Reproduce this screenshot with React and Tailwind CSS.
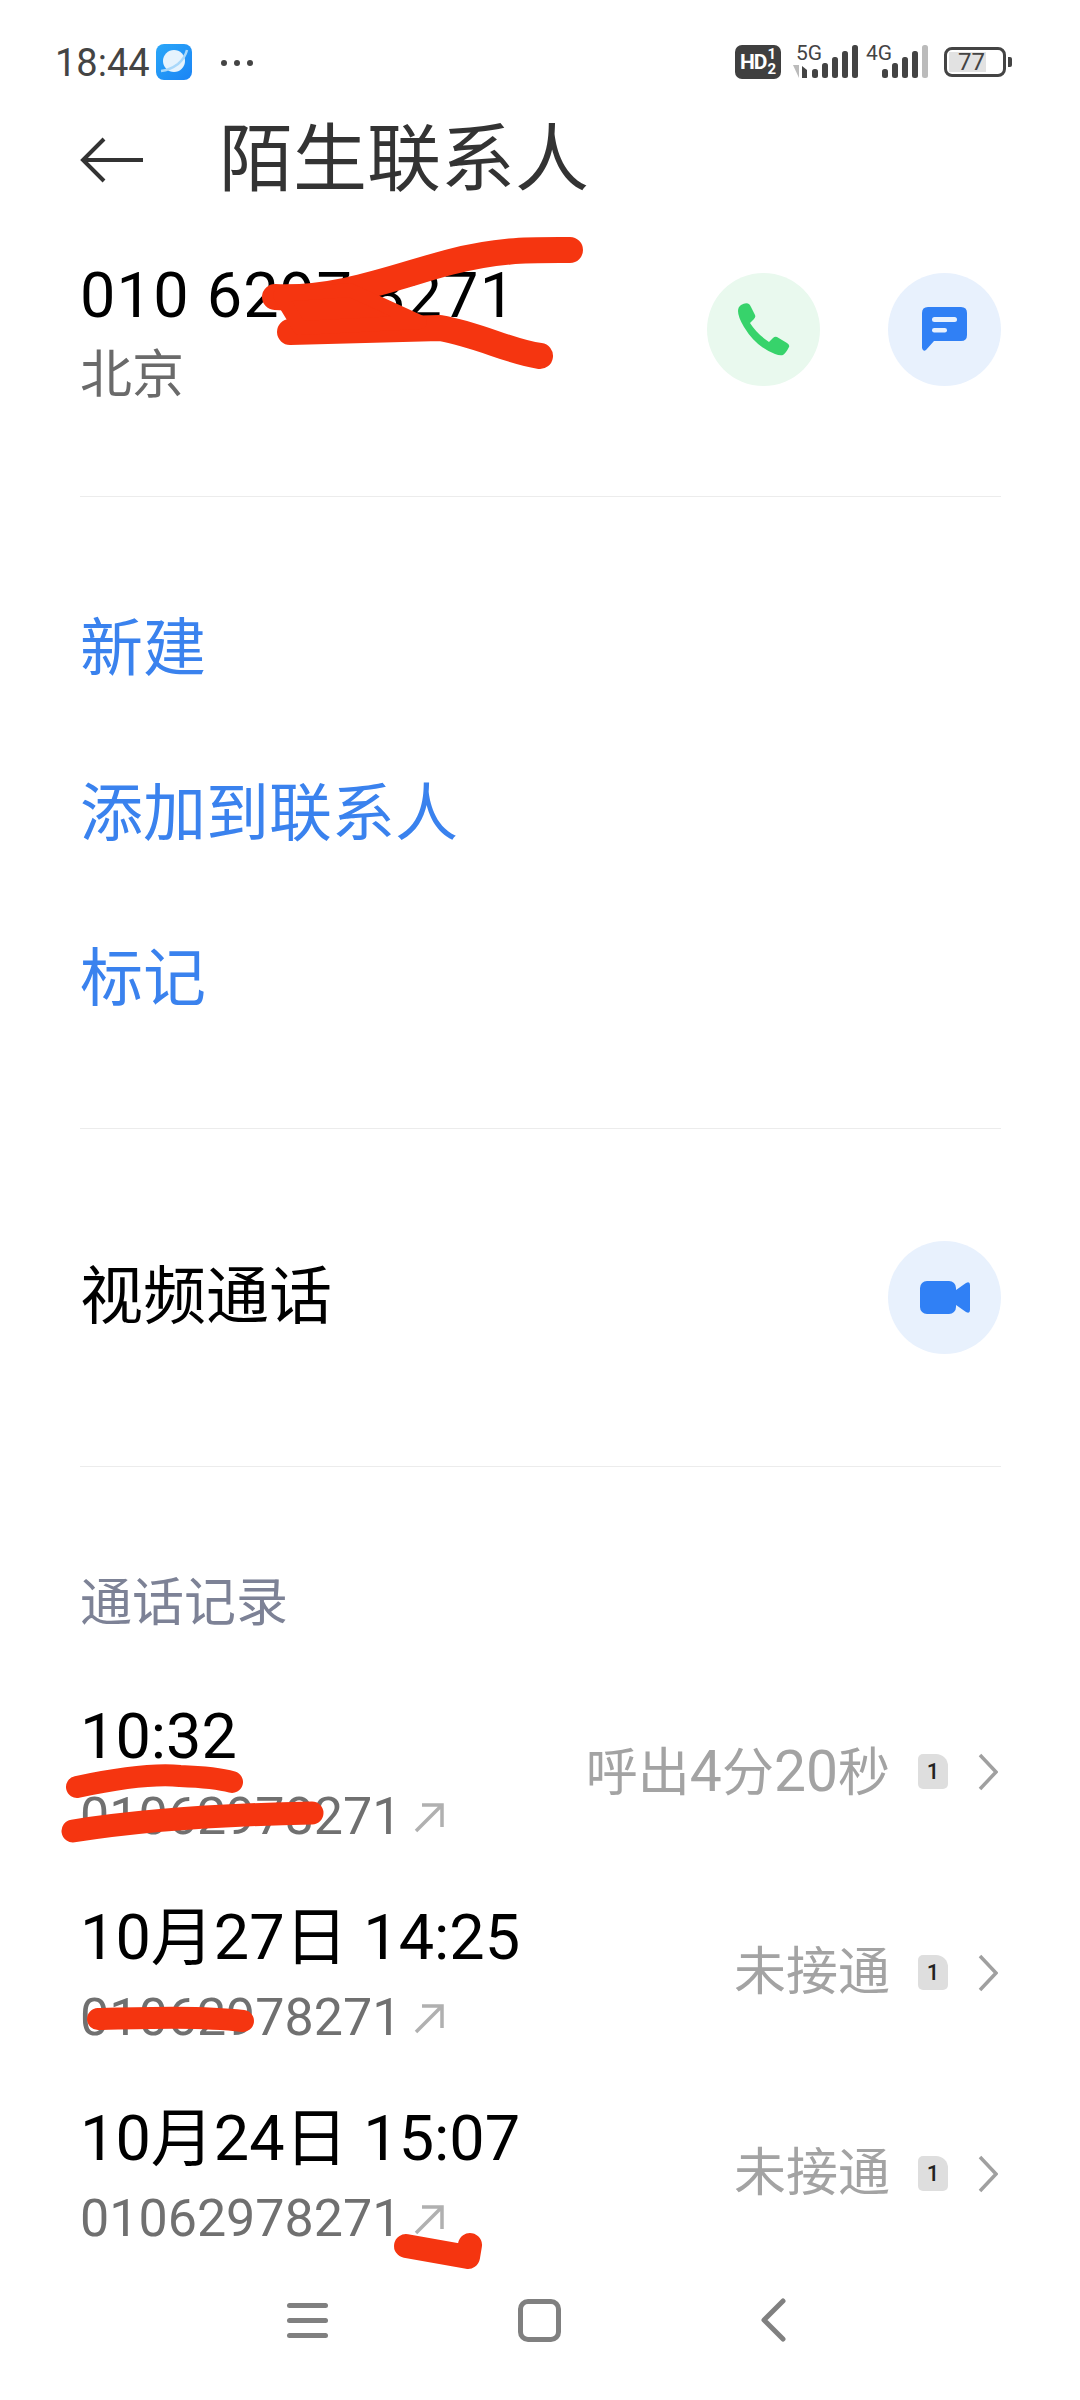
import React from 'react';

const font = "font-['Roboto','Noto_Sans_CJK_SC',sans-serif]";

const StatusBar = () => (
    <div className="h-[124px] flex items-center pl-[55px] pr-[68px] text-[#444]">
        <span className="text-[38px] leading-none w-[93px] pt-[2px]">18:44</span>
        <svg width="36" height="36" viewBox="0 0 36 36" className="ml-[8px]">
            <defs>
                <linearGradient id="appBg" x1="0" y1="0" x2="1" y2="1">
                    <stop offset="0" stopColor="#2aa7f8" />
                    <stop offset="1" stopColor="#1b84f5" />
                </linearGradient>
            </defs>
            <rect width="36" height="36" rx="8" fill="url(#appBg)" />
            <circle cx="18" cy="17" r="11" fill="#e6f3fd" />
            <path d="M5 27 Q14 26 22 20 Q29 14 31 6" fill="none" stroke="#a9d8fa" strokeWidth="2.5" />
        </svg>
        <div className="ml-[29px] mt-[2px] flex gap-[7px]">
            <div className="w-[6px] h-[6px] rounded-full bg-[#444]" />
            <div className="w-[6px] h-[6px] rounded-full bg-[#444]" />
            <div className="w-[6px] h-[6px] rounded-full bg-[#444]" />
        </div>
        <div className="ml-auto flex items-center">
            <div className="w-[46px] h-[34px] rounded-[7px] bg-[#3f3f3f] text-white flex items-center justify-center gap-[1px] font-bold">
                <span className="text-[21px] tracking-[-1px] leading-none">HD</span>
                <div className="flex flex-col text-[15px] leading-[15px]">
                    <span>1</span>
                    <span>2</span>
                </div>
            </div>
            <svg width="150" height="42" viewBox="0 -6 150 42" className="ml-[10px] mb-[10px]">
                <text x="5" y="18" fontSize="21" fill="#444">5G</text>
                <path d="M2 23 H8 V36 Z" fill="#bbb" />
                <path d="M11 24 L16 28 V36 H11Z" fill="#444" />
                <rect x="21" y="27" width="6" height="9" rx="2.5" fill="#444" />
                <rect x="31" y="21" width="6" height="15" rx="2.5" fill="#444" />
                <rect x="41" y="15" width="6" height="21" rx="2.5" fill="#444" />
                <rect x="51" y="9" width="6" height="27" rx="2.5" fill="#444" />
                <rect x="61" y="3" width="6" height="33" rx="2.5" fill="#444" />
                <text x="75" y="18" fontSize="21" fill="#444">4G</text>
                <rect x="91" y="27" width="6" height="9" rx="2.5" fill="#444" />
                <rect x="101" y="21" width="6" height="15" rx="2.5" fill="#444" />
                <rect x="111" y="15" width="6" height="21" rx="2.5" fill="#444" />
                <rect x="121" y="9" width="6" height="27" rx="2.5" fill="#444" />
                <rect x="131" y="3" width="6" height="33" rx="2.5" fill="#bbb" />
            </svg>
            <div className="ml-[3px] w-[62px] h-[30px] rounded-[8px] border-[3px] border-[#444] p-[2px] flex">
                <div className="w-[37px] bg-[#e2e2e2] flex items-center justify-end pr-[1px] text-[24px] leading-none">77</div>
            </div>
            <div className="ml-[2px] w-[4px] h-[10px] rounded-r-[2px] bg-[#444]" />
        </div>
    </div>
);

const RoundIcon = ({ children }) => (
    <div className="w-[113px] h-[113px] rounded-full bg-[#e8f1fd] flex items-center justify-center">
        {children}
    </div>
);

const Divider = () => <div className="h-[1px] bg-[#ececec]" />;

const CallRow = ({ time, status }) => (
    <div className="h-[201px] flex items-center">
        <div className="mt-[11px]">
            <div className="text-[63px] leading-[80px] text-black">{time}</div>
            <div className="flex items-center text-[52px] leading-[80px] text-[#707070]">
                01062978271
                <svg width="30" height="30" viewBox="0 0 30 30" className="ml-[13px] mt-[2px]" fill="none" stroke="#b0b0b0" strokeWidth="3.5">
                    <path d="M2 28 L28 2 M8 2 H28 V24" />
                </svg>
            </div>
        </div>
        <span className="ml-auto text-[52px] leading-none text-[#a3a3a3]">{status}</span>
        <div className="ml-[28px] w-[30px] h-[35px] bg-[#dedede] rounded-[5px] rounded-tr-[12px] flex items-center justify-center text-[22px] font-medium leading-none text-[#222]">1</div>
        <svg width="20" height="38" viewBox="0 0 20 38" className="ml-[30px] mr-[3px]" fill="none" stroke="#a0a0a0" strokeWidth="3.5">
            <path d="M2 2 L18 19 L2 36" />
        </svg>
    </div>
);

const App = () => {
    return (
        <div className={`${font} relative w-[1080px] h-[2400px] bg-white overflow-hidden`}>
            <StatusBar />

            {/* Header */}
            <div className="h-[66px] pt-[6px] flex items-center pl-[80px]">
                <svg width="63" height="46" viewBox="0 0 63 46" fill="none" stroke="#333" strokeWidth="4">
                    <path d="M63 23 H3 M24 2 L3 23 L24 44" />
                </svg>
                <h1 className="ml-[76px] text-[74px] leading-none text-[#333]">陌生联系人</h1>
            </div>

            <div className="pl-[80px] pr-[79px]">
                {/* Contact */}
                <div className="h-[306px] flex items-start">
                    <div className="pt-[66px]">
                        <div className="text-[63px] tracking-[1.2px] leading-[80px] text-black">010 6297 8271</div>
                        <div className="text-[52px] leading-[80px] text-[#6a6a6a]">北京</div>
                    </div>
                    <div className="ml-auto mt-[83px] flex gap-[68px]">
                        <div className="w-[113px] h-[113px] rounded-full bg-[#e9f9ee] flex items-center justify-center">
                            <svg width="52" height="53" viewBox="0 0 52 53" fill="#37d36b">
                                <path d="M3 2 Q7 -0.5 10 0.5 Q12 1 13 4 L17 12 Q18 14 16 16 L12 20 Q19 31 31 39 L35 35 Q37 33 39 34 L49 40 Q52 42 51 44 Q48 50 45 52 Q42 53 37 51 Q18 44 6 24 Q0 14 0 8 Q0 4 3 2Z" />
                            </svg>
                        </div>
                        <RoundIcon>
                            <svg width="45" height="45" viewBox="0 0 45 45">
                                <path d="M6 0 H39 Q45 0 45 6 V28 Q45 34 39 34 H12 L4 43 Q1 45 0 41 V6 Q0 0 6 0Z" fill="#3080f5" />
                                <rect x="10" y="10" width="25" height="5" rx="2.5" fill="#e8f1fd" />
                                <rect x="10" y="21" width="15" height="4.5" rx="2.2" fill="#e8f1fd" />
                            </svg>
                        </RoundIcon>
                    </div>
                </div>
                <Divider />

                {/* Actions */}
                <div className="pt-[70px] pb-[66px] text-[63px] text-[#3a82ee]">
                    <div className="h-[165px] flex items-center">新建</div>
                    <div className="h-[165px] flex items-center">添加到联系人</div>
                    <div className="h-[165px] flex items-center">标记</div>
                </div>
                <Divider />

                {/* Video call */}
                <div className="h-[337px] flex items-center justify-between text-[63px] text-black">
                    <span>视频通话</span>
                    <RoundIcon>
                        <svg width="50" height="33" viewBox="0 0 50 33" fill="#3080f5">
                            <rect width="36" height="33" rx="7" />
                            <path d="M36 9 L46 2 Q50 0 50 4 V29 Q50 33 46 31 L36 24Z" />
                        </svg>
                    </RoundIcon>
                </div>
                <Divider />

                {/* Call log */}
                <div className="pt-[107px] pb-[37px] text-[52px] leading-[60px] text-[#7d8296]">通话记录</div>
                <CallRow
                    time="10:32"
                    status={<>呼出<span className="text-[57px]">4</span>分<span className="text-[57px]">20</span>秒</>}
                />
                <CallRow time="10月27日 14:25" status="未接通" />
                <CallRow time="10月24日 15:07" status="未接通" />
            </div>

            {/* Nav bar */}
            <div className="h-[92px] flex items-center pl-[287px]">
                <div className="w-[41px] flex flex-col gap-[10px]">
                    <div className="h-[5px] rounded-full bg-[#808080]" />
                    <div className="h-[5px] rounded-full bg-[#808080]" />
                    <div className="h-[5px] rounded-full bg-[#808080]" />
                </div>
                <div className="ml-[190px] w-[43px] h-[43px] rounded-[10px] border-[5px] border-[#808080]" />
                <svg width="26" height="44" viewBox="0 0 26 44" className="ml-[199px]" fill="none" stroke="#808080" strokeWidth="5" strokeLinecap="round" strokeLinejoin="round">
                    <path d="M23 3 L4 22 L23 41" />
                </svg>
            </div>

            {/* Red marker scribbles drawn over the screenshot */}
            <svg width="1080" height="2400" viewBox="0 0 1080 2400" className="absolute inset-0 pointer-events-none" fill="none" stroke="#f53510" strokeLinecap="round" strokeLinejoin="round">
                <path d="M275 297 C340 300 400 275 450 262 S530 250 570 250" strokeWidth="26" />
                <path d="M290 332 L440 328 C480 335 510 352 540 356" strokeWidth="26" />
                <path d="M280 295 L350 290 L420 322 L300 328Z" fill="#f53510" strokeWidth="14" />
                <path d="M77 1787 C110 1780 150 1773 180 1776 C205 1777 225 1780 232 1782" strokeWidth="22" />
                <path d="M73 1831 C130 1822 200 1815 312 1813" strokeWidth="23" />
                <path d="M98 2019 C140 2018 200 2016 243 2021" strokeWidth="22" />
                <path d="M406 2246 L468 2257 L470 2245" strokeWidth="24" />
            </svg>
        </div>
    );
};

export default App;
